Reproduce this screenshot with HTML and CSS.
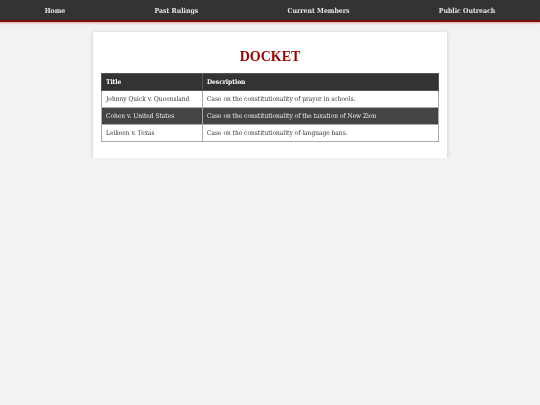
FILE: index.html
```html
<!DOCTYPE html>
<html>
<head>
<meta charset="utf-8">
<link rel="stylesheet" href="styles.css">
</head>
<body>
<nav class="nav">
  <a class="nav-link" href="#">Home</a>
  <a class="nav-link" href="#">Past Rulings</a>
  <a class="nav-link" href="#">Current Members</a>
  <a class="nav-link" href="#">Public Outreach</a>
</nav>
<main class="card">
  <h1 class="title">DOCKET</h1>
  <table class="docket">
    <thead>
      <tr><th class="col-title">Title</th><th>Description</th></tr>
    </thead>
    <tbody>
      <tr><td>Johnny Quick v. Queensland</td><td>Case on the constitutionality of prayer in schools.</td></tr>
      <tr class="dark"><td>Cohen v. United States</td><td>Case on the constitutionality of the taxation of New Zion</td></tr>
      <tr><td>Leikeen v. Texas</td><td>Case on the constitutionality of language bans.</td></tr>
    </tbody>
  </table>
</main>
</body>
</html>
```
FILE: styles.css
```css
html, body {
  margin: 0;
  padding: 0;
}
body {
  background: #f2f2f2;
  font-family: "DejaVu Serif Condensed", "DejaVu Serif", serif;
  font-stretch: condensed;
  font-size: 6.55px;
  color: #333;
  -webkit-font-smoothing: antialiased;
}
.nav {
  display: flex;
  justify-content: space-around;
  align-items: center;
  height: 22px;
  padding-top: 1px;
  box-sizing: border-box;
  background: #333;
  border-bottom: 2px solid #7a0e0e;
  box-shadow: 0 1px 2px rgba(180, 0, 0, 0.35);
  will-change: transform;
}
.nav-link {
  color: #e6e6e6;
  text-decoration: none;
  font-weight: bold;
  font-size: 6.9px;
}
.card {
  width: 338px;
  margin: 10px auto 0;
  background: #fff;
  padding: 17px 8px 16px;
  box-shadow: 0 1px 4px rgba(0, 0, 0, 0.2);
  will-change: transform;
}
.title {
  margin: 0 0 8px;
  text-align: center;
  color: #990000;
  font-family: "Liberation Serif", serif;
  font-stretch: normal;
  font-size: 14px;
  line-height: 16px;
}
.docket {
  width: 100%;
  border-collapse: collapse;
  border: 1px solid #aaa;
}
.docket th, .docket td {
  text-align: left;
  padding: 0 4px;
  height: 16px;
  border: 1px solid #aaa;
}
.docket th {
  background: #333;
  color: #fff;
  font-weight: bold;
  border-color: #555;
}
.col-title {
  width: 92px;
}
.docket tr.dark td {
  background: #444;
  color: #eee;
}
```
